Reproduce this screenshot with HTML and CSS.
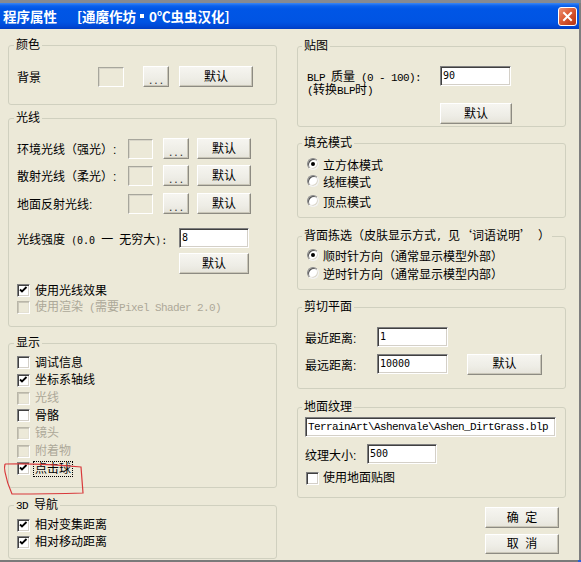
FILE: index.html
```html
<!DOCTYPE html>
<html lang="zh-CN">
<head>
<meta charset="utf-8">
<title>程序属性</title>
<link rel="stylesheet" href="styles.css">
</head>
<body>
<div class="window">
  <div class="frame-top"></div>
  <div class="middle">
    <div class="inner">
      <div class="titlebar">
        <span class="title-main">程序属性</span>
        <span class="title-sub">[通魔作坊 <span class="bullet"></span> 0℃虫虫汉化]</span>
        <span class="close-btn"><svg viewBox="0 0 17 17" width="17" height="17"><path d="M5 5 L12 12 M12 5 L5 12" stroke="#fff" stroke-width="2" stroke-linecap="square"/></svg></span>
      </div>
      <div class="client">
        <div class="col col-left">
          <fieldset class="gb gb-color">
            <legend>颜色</legend>
            <div class="row row-color">
              <span class="lbl w81">背景</span>
              <span class="swatch sw-color"></span>
              <span class="btn dots dots-color">...</span>
              <span class="btn def-color">默认</span>
            </div>
          </fieldset>

          <fieldset class="gb gb-light">
            <legend>光线</legend>
            <div class="row lrow lrow-first">
              <span class="lbl w111">环境光线（强光）:</span>
              <span class="swatch sw-light"></span>
              <span class="btn dots dots-light">...</span>
              <span class="btn def-light">默认</span>
            </div>
            <div class="row lrow">
              <span class="lbl w111">散射光线（柔光）:</span>
              <span class="swatch sw-light"></span>
              <span class="btn dots dots-light">...</span>
              <span class="btn def-light">默认</span>
            </div>
            <div class="row lrow lrow-third">
              <span class="lbl w111">地面反射光线:</span>
              <span class="swatch sw-light"></span>
              <span class="btn dots dots-light">...</span>
              <span class="btn def-light">默认</span>
            </div>
            <div class="row intensity-row">
              <span class="lbl w162">光线强度<span class="sm"> (0.0 </span>一<span class="sm"> </span>无穷大<span class="sm">):</span></span>
              <span class="edit e70">8</span>
            </div>
            <div class="row intensity-btn-row">
              <span class="btn def-intensity">默认</span>
            </div>
            <div class="checks light-checks">
              <div class="crow"><span class="cb"><svg viewBox="0 0 13 13" width="13" height="13"><path d="M3 5.5 L5 7.5 L9.5 3" fill="none" stroke="#000" stroke-width="1.8"/></svg></span><span class="ctext">使用光线效果</span></div>
              <div class="crow disabled"><span class="cb cb-dis"></span><span class="ctext">使用渲染<span class="mono"> (</span>需要<span class="mono">Pixel Shader 2.0)</span></span></div>
            </div>
          </fieldset>

          <fieldset class="gb gb-display">
            <legend>显示</legend>
            <div class="checks display-checks">
              <div class="crow dr"><span class="cb"></span><span class="ctext">调试信息</span></div>
              <div class="crow dr"><span class="cb"><svg viewBox="0 0 13 13" width="13" height="13"><path d="M3 5.5 L5 7.5 L9.5 3" fill="none" stroke="#000" stroke-width="1.8"/></svg></span><span class="ctext">坐标系轴线</span></div>
              <div class="crow dr disabled"><span class="cb cb-dis"></span><span class="ctext">光线</span></div>
              <div class="crow dr"><span class="cb"></span><span class="ctext">骨骼</span></div>
              <div class="crow dr disabled"><span class="cb cb-dis"></span><span class="ctext">镜头</span></div>
              <div class="crow dr disabled"><span class="cb cb-dis"></span><span class="ctext">附着物</span></div>
              <div class="crow dr"><span class="cb"><svg viewBox="0 0 13 13" width="13" height="13"><path d="M3 5.5 L5 7.5 L9.5 3" fill="none" stroke="#000" stroke-width="1.8"/></svg></span><span class="ctext focus">点击球</span></div>
            </div>
          </fieldset>

          <fieldset class="gb gb-nav">
            <legend><span class="mono">3D </span>导航</legend>
            <div class="checks nav-checks">
              <div class="crow"><span class="cb"><svg viewBox="0 0 13 13" width="13" height="13"><path d="M3 5.5 L5 7.5 L9.5 3" fill="none" stroke="#000" stroke-width="1.8"/></svg></span><span class="ctext">相对变集距离</span></div>
              <div class="crow"><span class="cb"><svg viewBox="0 0 13 13" width="13" height="13"><path d="M3 5.5 L5 7.5 L9.5 3" fill="none" stroke="#000" stroke-width="1.8"/></svg></span><span class="ctext">相对移动距离</span></div>
            </div>
          </fieldset>
        </div>

        <div class="col col-right">
          <fieldset class="gb gb-tex">
            <legend>贴图</legend>
            <div class="row tex-row">
              <span class="lbl blp-lbl"><span class="mono">BLP </span>质量<span class="mono"> (0 - 100):</span><br><span class="mono">(</span>转换<span class="mono">BLP</span>时<span class="mono">)</span></span>
              <span class="edit e71">90</span>
            </div>
            <div class="row tex-btn-row">
              <span class="btn def-tex">默认</span>
            </div>
          </fieldset>

          <fieldset class="gb gb-fill">
            <legend>填充模式</legend>
            <div class="radios fill-radios">
              <div class="rrow"><span class="rb"><span class="dot"></span></span><span class="rtext">立方体模式</span></div>
              <div class="rrow"><span class="rb"></span><span class="rtext">线框模式</span></div>
              <div class="rrow rrow-gap"><span class="rb"></span><span class="rtext">顶点模式</span></div>
            </div>
          </fieldset>

          <fieldset class="gb gb-cull">
            <legend class="cjk">背面拣选（皮肤显示方式<span class="sm">, </span>见‘词语说明’<span class="sm"> </span>）</legend>
            <div class="radios cull-radios">
              <div class="rrow r18"><span class="rb"><span class="dot"></span></span><span class="rtext">顺时针方向（通常显示模型外部）</span></div>
              <div class="rrow r18"><span class="rb"></span><span class="rtext">逆时针方向（通常显示模型内部）</span></div>
            </div>
          </fieldset>

          <fieldset class="gb gb-clip">
            <legend>剪切平面</legend>
            <div class="row clip-row clip-first">
              <span class="lbl w72">最近距离:</span>
              <span class="edit e71">1</span>
            </div>
            <div class="row clip-row">
              <span class="lbl w72">最远距离:</span>
              <span class="edit e71">10000</span>
              <span class="btn def-clip">默认</span>
            </div>
          </fieldset>

          <fieldset class="gb gb-ground">
            <legend>地面纹理</legend>
            <div class="edit path-edit"><span class="mono">TerrainArt\Ashenvale\Ashen_DirtGrass.blp</span></div>
            <div class="row size-row">
              <span class="lbl w62">纹理大小:</span>
              <span class="edit e70">500</span>
            </div>
            <div class="crow ground-check"><span class="cb"></span><span class="ctext">使用地面贴图</span></div>
          </fieldset>

          <div class="actions">
            <span class="btn action">确&nbsp;&nbsp;定</span>
            <span class="btn action action-cancel">取&nbsp;&nbsp;消</span>
          </div>
        </div>
      </div>
    </div>
    <div class="frame-right"></div>
  </div>
  <div class="frame-bottom"><span class="taskbar-bit"></span></div>

  <svg class="annotation" width="581" height="562" viewBox="0 0 581 562">
    <path d="M5 464 Q40 463 81 467 L83 493 Q50 494 12 494 Q7 483 5 472 Q4 467 5 464" fill="none" stroke="#D8393B" stroke-width="1.2"/>
  </svg>
</div>
</body>
</html>
```

FILE: styles.css
```css
* {
  box-sizing: border-box;
}

html,
body {
  margin: 0;
  padding: 0;
}

body {
  width: 581px;
  height: 562px;
  overflow: hidden;
  background: #ECE9D8;
  font-family: "Liberation Sans", "Noto Sans CJK SC", sans-serif;
  font-size: 12px;
  color: #000;
}

.window {
  position: relative;
  width: 581px;
  height: 562px;
  display: flex;
  flex-direction: column;
  background: #ECE9D8;
}

.frame-top {
  flex: none;
  height: 3px;
  background: #868A91;
}

.middle {
  flex: 1;
  display: flex;
  min-height: 0;
}

.inner {
  flex: 1;
  display: flex;
  flex-direction: column;
}

.frame-right {
  flex: none;
  width: 2px;
  background: #7E7E7E;
}

.frame-bottom {
  flex: none;
  height: 2px;
  background: #7A7A7A;
  display: flex;
  justify-content: flex-end;
}

.taskbar-bit {
  width: 3px;
  background: #2A5FD8;
}

/* title bar */
.titlebar {
  flex: none;
  height: 26px;
  display: flex;
  align-items: center;
  padding-left: 3px;
  padding-right: 2px;
  color: #fff;
  font-family: "Noto Sans CJK SC", sans-serif;
  font-weight: 700;
  font-size: 13.5px;
  background: linear-gradient(to bottom, #3A86F4 0, #0A60EB 3px, #0056E6 6px, #0054E3 19px, #0049D6 23px, #003DC2 26px);
}

.title-main {
  margin-right: 20px;
}

.title-sub {
  display: flex;
  align-items: center;
}

.bullet {
  display: inline-block;
  width: 4px;
  height: 4px;
  background: #fff;
  margin: 0 5px 0 4px;
}

.close-btn {
  margin-left: auto;
  width: 19px;
  height: 19px;
  border: 1px solid #fff;
  border-radius: 3px;
  background-color: #D6532F;
  background-image: linear-gradient(135deg, #EC9274 0, #DE613B 40%, #C7441F 75%, #B33515 100%);
  display: flex;
  align-items: center;
  justify-content: center;
}

.close-btn svg {
  display: block;
}

/* client area */
.client {
  flex: 1;
  display: flex;
  gap: 20px;
  padding-left: 8px;
}

.col {
  width: 269px;
  display: flex;
  flex-direction: column;
}

.col-left {
  padding-top: 9px;
}

.col-right {
  padding-top: 10px;
}

/* group boxes */
.gb {
  margin: 0;
  padding: 0 8px;
  border: 1px solid #D0D0BF;
  border-radius: 3px;
  min-width: 0;
}

.col-right .gb {
  padding: 0 7px;
}

.gb legend {
  padding: 0 2px;
  margin-left: -3px;
  line-height: 14px;
  font-size: 12px;
  white-space: nowrap;
}

.gb legend.cjk {
  font-family: "Noto Sans CJK SC", sans-serif;
}

.gb-color { height: 67px; }
.gb-light { height: 216px; margin-top: 6px; }
.gb-display { height: 152px; margin-top: 9px; }
.gb-nav { height: 61px; margin-top: 10px; }

.gb-tex { height: 88px; }
.gb-fill { height: 82px; margin-top: 9px; }
.gb-cull { height: 62px; margin-top: 10px; }
.gb-clip { height: 89px; margin-top: 10px; }
.gb-ground { height: 98px; margin-top: 11px; }

/* generic rows */
.row {
  display: flex;
  align-items: center;
}

.lbl {
  flex: none;
  white-space: nowrap;
}

.w62 { width: 62px; }
.w72 { width: 72px; }
.w81 { width: 81px; }
.w111 { width: 111px; }
.w162 { width: 162px; }

/* half-width latin in the dialog font: serif style and sans style */
.mono {
  font-family: "Liberation Mono", "Noto Sans CJK SC", monospace;
  font-size: 11px;
  letter-spacing: -0.6px;
  white-space: pre;
}

.sm {
  font-family: "DejaVu Sans Mono", "Noto Sans CJK SC", monospace;
  font-size: 10px;
  white-space: pre;
}

/* controls */
.btn {
  flex: none;
  display: flex;
  align-items: center;
  justify-content: center;
  height: 21px;
  background: linear-gradient(to bottom, #F6F5F0 0, #EEEDE6 60%, #E6E4DA 100%);
  border: 1px solid;
  border-color: #FFFFFF #8D8B82 #8D8B82 #FFFFFF;
  box-shadow: inset -1px -1px 0 #C9C6B8;
  font-size: 12px;
  line-height: 1;
}

.dots {
  width: 26px;
  letter-spacing: 2px;
  padding: 6px 0 0 2px;
  color: #333;
}

.swatch {
  flex: none;
  height: 20px;
  border: 1px solid;
  border-color: #A7A69C #FFFFFF #FFFFFF #A7A69C;
  box-shadow: inset 1px 1px 0 #D8D5C8;
  background: #ECE9D8;
}

.edit {
  flex: none;
  height: 20px;
  background: #fff;
  border: 1px solid;
  border-color: #7F7F7F #FFFFFF #FFFFFF #7F7F7F;
  box-shadow: inset 1px 1px 0 #404040, inset -1px -1px 0 #D4D0C8;
  padding-left: 2px;
  font-family: "DejaVu Sans Mono", monospace;
  font-size: 10px;
  line-height: 18px;
  white-space: nowrap;
  overflow: hidden;
}

.e70 { width: 70px; }
.e71 { width: 71px; }

/* colour group */
.row-color {
  height: 21px;
  margin-top: 14px;
}

.sw-color {
  width: 26px;
  margin-right: 19px;
}

.dots-color {
  margin-right: 10px;
}

.def-color {
  width: 74px;
}

/* light group */
.lrow {
  height: 21px;
  margin-top: 6px;
}

.lrow-first {
  margin-top: 13px;
}

.lrow-third {
  margin-top: 7px;
}

.sw-light {
  width: 25px;
  margin-right: 10px;
}

.dots-light {
  margin-right: 8px;
}

.def-light {
  width: 54px;
}

.intensity-row {
  height: 20px;
  margin-top: 14px;
}

.intensity-btn-row {
  margin-top: 5px;
  padding-left: 162px;
}

.def-intensity {
  width: 70px;
}

/* checkboxes */
.checks {
  display: flex;
  flex-direction: column;
}

.crow {
  display: flex;
  align-items: center;
  height: 17px;
}

.cb {
  flex: none;
  width: 13px;
  height: 13px;
  background: #fff;
  border: 1px solid;
  border-color: #808080 #FFFFFF #FFFFFF #808080;
  box-shadow: inset 1px 1px 0 #404040, inset -1px -1px 0 #D4D0C8;
  margin-right: 5px;
}

.cb svg {
  display: block;
  margin: -1px 0 0 -1px;
}

.cb-dis {
  background: #ECE9D8;
  border-color: #B9B6A8 #FFFFFF #FFFFFF #B9B6A8;
  box-shadow: inset 1px 1px 0 #C9C6B8, inset -1px -1px 0 #E4E1D4;
}

.disabled .ctext {
  color: #ACA899;
}

.ctext {
  white-space: nowrap;
  line-height: 14px;
}

.focus {
  outline: 1px dotted #000;
  outline-offset: 0;
  padding: 0 1px;
  margin-left: -1px;
}

.light-checks {
  margin-top: 8px;
}

.display-checks {
  margin-top: 4px;
}

.dr {
  height: 17.67px;
}

.nav-checks {
  margin-top: 3.5px;
}

/* texture group */
.tex-row {
  align-items: flex-start;
  margin-top: 13px;
}

.blp-lbl {
  width: 135px;
  padding: 5px 0 0 2px;
  line-height: 12px;
}

.tex-btn-row {
  margin-top: 6px;
  padding-left: 135px;
}

.def-tex {
  width: 72px;
}

/* radios */
.radios {
  display: flex;
  flex-direction: column;
}

.rrow {
  display: flex;
  align-items: center;
  height: 17px;
}

.r18 {
  height: 18px;
}

.rrow-gap {
  margin-top: 3px;
}

.fill-radios {
  margin-top: 5.5px;
}

.cull-radios {
  margin-top: 2px;
}

.rb {
  flex: none;
  width: 12px;
  height: 12px;
  margin: 0 4px 0 2px;
  border-radius: 50%;
  background: #fff;
  border: 1px solid;
  border-color: #8A8A8A #F2F2F2 #F2F2F2 #8A8A8A;
  box-shadow: inset 1px 1px 0 #555, inset -1px -1px 0 #DCD8CC;
  display: flex;
  align-items: center;
  justify-content: center;
}

.dot {
  width: 4px;
  height: 4px;
  border-radius: 50%;
  background: #000;
}

.rtext {
  white-space: nowrap;
}

/* clip group */
.clip-row {
  height: 20px;
  margin-top: 7px;
}

.clip-first {
  margin-top: 13px;
}

.def-clip {
  width: 75px;
  margin-left: 19px;
}

/* ground texture group */
.path-edit {
  width: 251px;
  margin-top: 3px;
  padding-left: 2px;
}

.size-row {
  height: 20px;
  margin-top: 7px;
}

.ground-check {
  margin-top: 5.5px;
  padding-left: 1px;
}

.ground-check .cb {
  margin-right: 4px;
}

/* dialog buttons */
.actions {
  display: flex;
  flex-direction: column;
  align-items: flex-end;
  padding-right: 7px;
  margin-top: 9px;
}

.action {
  width: 74px;
}

.action-cancel {
  margin-top: 6px;
  height: 20px;
}

/* hand-drawn annotation over the screenshot */
.annotation {
  position: absolute;
  left: 0;
  top: 0;
  pointer-events: none;
}
```
